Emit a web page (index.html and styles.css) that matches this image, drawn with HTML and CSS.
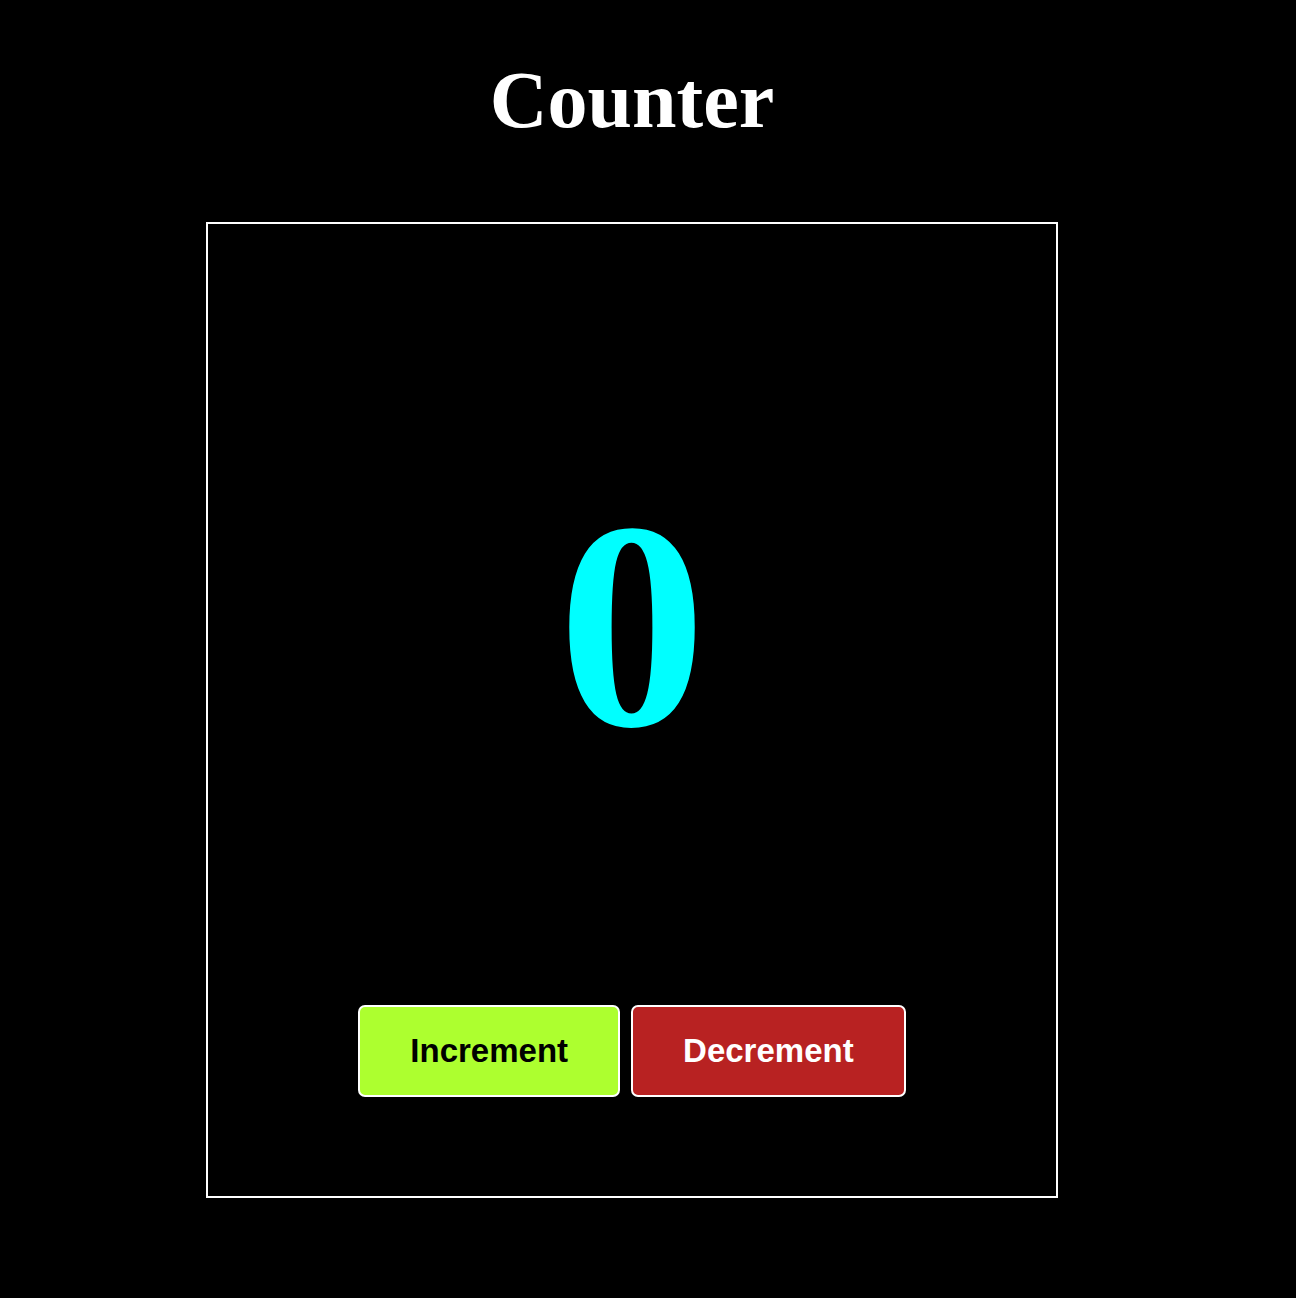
FILE: index.html
```html
<!DOCTYPE html>
<html lang="en">
<head>
<meta charset="utf-8">
<title>Counter</title>
<link rel="stylesheet" href="styles.css">
</head>
<body>
<main class="page">
  <h1 class="title">Counter</h1>
  <section class="counter-box">
    <div class="count">0</div>
    <div class="actions">
      <button class="btn btn-inc">Increment</button>
      <button class="btn btn-dec">Decrement</button>
    </div>
  </section>
</main>
</body>
</html>
```
FILE: styles.css
```css
html, body {
  margin: 0;
  padding: 0;
  background: #000;
}
body {
  font-family: "Liberation Serif", "Times New Roman", serif;
  color: #fff;
}
.page {
  width: 1264px;
  display: flex;
  flex-direction: column;
  align-items: center;
  padding-top: 54px;
  padding-bottom: 100px;
}
.title {
  margin: 0;
  font-size: 80px;
  font-weight: bold;
  line-height: 92px;
  text-align: center;
}
.counter-box {
  margin-top: 76px;
  width: 848px;
  height: 972px;
  border: 2px solid #fff;
  display: flex;
  flex-direction: column;
  align-items: center;
}
.count {
  margin-top: 253px;
  font-size: 296px;
  line-height: 296px;
  font-weight: bold;
  color: #00ffff;
}
.actions {
  margin-top: 232px;
  display: flex;
  gap: 11px;
}
.btn {
  font-family: "Liberation Sans", Arial, sans-serif;
  font-size: 33px;
  font-weight: bold;
  line-height: 38px;
  padding: 25px 50px;
  border: 2px solid #fff;
  border-radius: 7px;
  cursor: pointer;
}
.btn-inc {
  background: #adff2f;
  color: #000;
}
.btn-dec {
  background: #b82222;
  color: #fff;
}
```
